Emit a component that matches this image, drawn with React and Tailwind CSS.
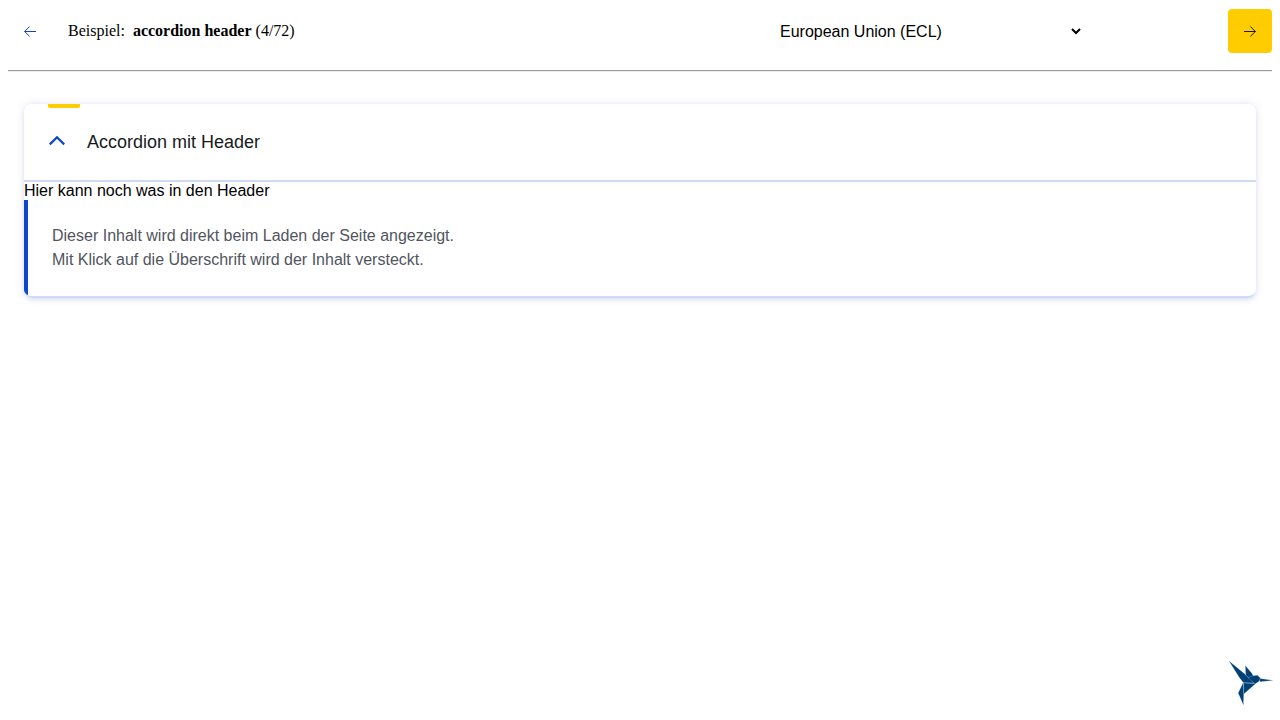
import { useState } from "react";

function Arrow({ back }) {
  return (
    <svg viewBox="0 0 12 12" className="size-3" fill="none" stroke={back ? "#0e46cb" : "#171a22"} strokeWidth="1" aria-hidden="true">
      <path d={back ? "M12 6.5H0.6M5.6 1.5L0.6 6.5L5.6 11.5" : "M0 6.5H11.4M6.4 1.5L11.4 6.5L6.4 11.5"} />
    </svg>
  );
}

function Hummingbird() {
  return (
    <svg viewBox="0 0 44 44" className="size-11" fill="#004077" stroke="#bcd0e0" strokeWidth="0.2" role="img" aria-label="KoliBri">
      <path d="M0 0L15.5 12.8L25 22L14.4 21.7L10 16Z" />
      <path d="M16.3 4.5L23 12.5L24.2 15L20 17.3L16.8 14Z" />
      <path d="M19 17L24 14.7L28.5 14.2L31.3 17L30.5 20L26 23Z" />
      <path d="M31 17.6L44 19.3L31 20.8Z" />
      <path d="M14.4 21.9L26.8 22.4L14.8 33Z" />
      <path d="M14 22L14.7 32.5L14.4 44L9.2 32Z" />
    </svg>
  );
}

export default function App() {
  const [open, setOpen] = useState(true);
  return (
    <div className="flex min-h-screen flex-col bg-white px-2 font-['Liberation_Sans',Arial,sans-serif] text-base text-black">
      <header className="flex items-center border-b border-[#eeeeee]">
        <div className="flex flex-1 items-center border-b border-[#9a9a9a] pt-[9px] pb-[17px]">
          <button type="button" aria-label="Vorheriges Beispiel" className="flex size-11 items-center justify-center rounded">
            <Arrow back />
          </button>
          <p className="ml-4 flex-1 font-['Liberation_Serif','Times_New_Roman',serif] leading-5">
            Beispiel:&nbsp; <strong>accordion header</strong> (4/72)
          </p>
          <select aria-label="Theme" defaultValue="ecl" className="mr-36 h-11 w-[308px] bg-white text-base">
            <option value="ecl">European Union (ECL)</option>
          </select>
          <button type="button" aria-label="Nächstes Beispiel" className="flex size-11 items-center justify-center rounded bg-[#ffcc00]">
            <Arrow />
          </button>
        </div>
      </header>

      <main className="flex-1 px-4 pt-8">
        <section className="overflow-hidden rounded-lg border-b-2 border-[#cfdaf5] shadow-[0_2px_4px_rgba(9,49,142,0.08),0_0_10px_rgba(4,40,153,0.1)]">
          <div className="border-b-2 border-[#cfdaf5] px-6">
            <div className="h-1 w-8 rounded-b-xs bg-[#ffcc00]" />
            <h2 className="text-lg">
              <button
                type="button"
                aria-expanded={open}
                onClick={() => setOpen(!open)}
                className="flex h-[72px] w-full items-center gap-[21px] pb-1 text-left text-[#171a22]"
              >
                <svg viewBox="0 0 18 18" className={open ? "size-[18px]" : "size-[18px] rotate-180"} fill="none" stroke="#0e46cb" strokeWidth="2.2" aria-hidden="true">
                  <path d="M1.8 11.4L9 4.2L16.2 11.4" />
                </svg>
                Accordion mit Header
              </button>
            </h2>
          </div>
          <div className="leading-[18px]">Hier kann noch was in den Header</div>
          {open && (
            <div className="border-l-4 border-[#0e46cb] p-6 leading-6 text-[#515560]">
              <p>Dieser Inhalt wird direkt beim Laden der Seite angezeigt.</p>
              <p>Mit Klick auf die Überschrift wird der Inhalt versteckt.</p>
            </div>
          )}
        </section>
      </main>

      <footer className="-mr-2 flex justify-end pr-[7px] pb-[15px]">
        <Hummingbird />
      </footer>
    </div>
  );
}
